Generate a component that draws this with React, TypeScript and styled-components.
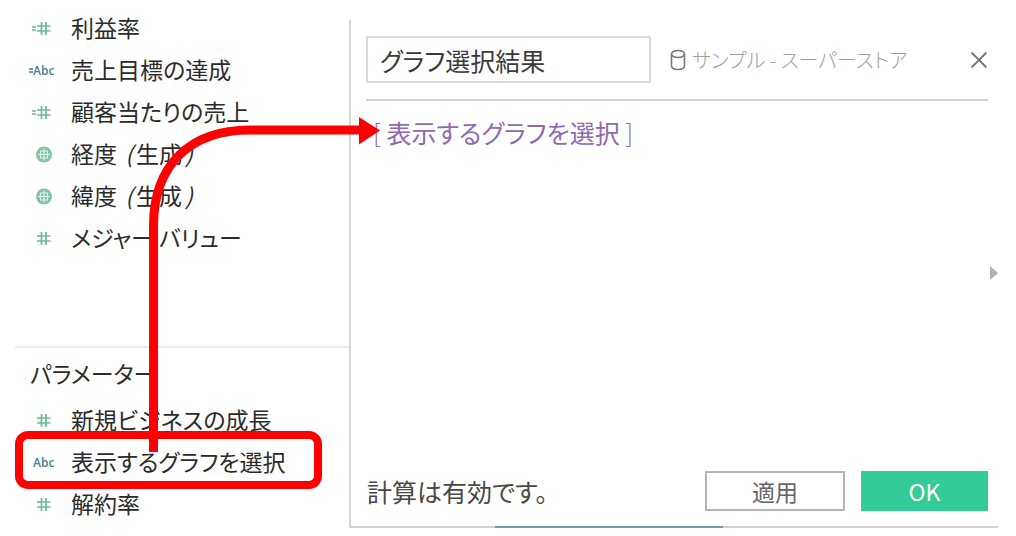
import React from "react";
import styled, { createGlobalStyle } from "styled-components";

const GlobalStyle = createGlobalStyle`
  *, *::before, *::after { box-sizing: border-box; }
  body {
    margin: 0;
    background: #fff;
    color: #2b2b2b;
    font-family: "Noto Sans CJK JP", sans-serif;
    font-size: 23px;
    font-feature-settings: "palt";
  }
  button, input { font: inherit; font-feature-settings: inherit; }
`;

const Page = styled.main`
  position: relative;
  display: grid;
  grid-template-columns: 334px minmax(0, 1fr);
  min-height: 100vh;
  padding: 20px 18px 8px 15px;
`;

const Sidebar = styled.aside`
  display: flex;
  flex-direction: column;
  padding-bottom: 2px;
`;

const Measures = styled.section`
  flex: 1;
  margin-top: -12px;
`;

const Parameters = styled.section`
  border-top: 2px solid #ececec;
`;

const Heading = styled.h2`
  margin: 0;
  padding: 0 0 2px 15px;
  font-size: 23px;
  font-weight: 400;
  line-height: 50px;
`;

const List = styled.ul`
  margin: 0;
  padding: 0;
  list-style: none;
`;

const Field = styled.li`
  position: relative;
  display: grid;
  grid-template-columns: 56px 1fr;
  align-items: center;
  height: 42px;
  white-space: nowrap;
`;

const IconCell = styled.span`
  display: flex;
  align-items: center;
  justify-content: flex-end;
  padding-right: 15px;
`;

const Label = styled.span`
  padding-bottom: 4px;
`;

const Paren = styled.i`
  margin: 0 3px;
`;

const Highlight = styled.span`
  position: absolute;
  inset: -11px 27px -5px 0;
  border: 8px solid #f00;
  border-radius: 13px;
`;

const Dialog = styled.section`
  display: flex;
  flex-direction: column;
  border-left: 2px solid #d6d6d6;
`;

const Header = styled.header`
  display: flex;
  align-items: center;
  margin: 0 10px 0 15px;
  padding: 16px 0;
  border-bottom: 2px solid #d2d2d2;
`;

const NameInput = styled.input`
  width: 285px;
  height: 47px;
  padding: 0 12px;
  border: 2px solid #d8d8d8;
  border-radius: 2px;
  background: #fff;
  color: #3a3a3a;
  font-size: 25px;
  outline: none;
`;

const Source = styled.span`
  display: flex;
  flex: 1;
  align-items: center;
  gap: 6px;
  margin-left: 19px;
  color: #a0a0a0;
  font-size: 20px;
  font-weight: 300;
  line-height: 28px;
  white-space: nowrap;
`;

const CloseButton = styled.button`
  display: flex;
  padding: 0;
  border: 0;
  background: none;
`;

const Body = styled.div`
  display: flex;
  flex: 1;
  justify-content: space-between;
`;

const Editor = styled.div`
  flex: 1;
  padding: 11px 0 0 22px;
  color: #9068b4;
  font-size: 25px;
  line-height: 40px;
  outline: none;
`;

const Bracket = styled.span`
  font-weight: 300;
`;

const ExpandButton = styled.button`
  align-self: flex-start;
  display: flex;
  margin-top: 165px;
  padding: 0;
  border: 0;
  background: none;
`;

const Footer = styled.footer`
  display: flex;
  align-items: center;
  gap: 16px;
  padding: 0 10px 15px 16px;
`;

const Status = styled.p`
  flex: 1;
  margin: 0;
  color: #484848;
  font-size: 25px;
  line-height: 40px;
`;

const ActionButton = styled.button<{ $primary?: boolean }>`
  width: ${(p) => (p.$primary ? 127 : 140)}px;
  height: 40px;
  padding: 0;
  border: 2px solid ${(p) => (p.$primary ? "#33cc99" : "#b5b5b5")};
  background: ${(p) => (p.$primary ? "#33cc99" : "#fff")};
  color: ${(p) => (p.$primary ? "#fff" : "#666")};
  line-height: 36px;
`;

const BottomEdge = styled.div`
  display: grid;
  grid-template-columns: 144px 228px 1fr;
  height: 2px;
  background: #d2d2d2;
`;

const BlueEdge = styled.span`
  grid-column: 2;
  background: #6f9fae;
`;

const Arrow = styled.svg`
  position: absolute;
  left: 0;
  top: 0;
  pointer-events: none;
`;

type Kind = "number" | "calcNumber" | "text" | "calcText" | "geo";

function FieldIcon({ kind }: { kind: Kind }) {
  const green = "#68bb95";
  const blue = "#3f8199";
  if (kind === "geo") {
    return (
      <svg width="20" height="20" viewBox="0 0 20 20" aria-hidden="true">
        <circle cx="8" cy="9.500" r="8" fill="#7fc6a6" />
        <path
          d="M2 9.500h12M8 3.500v12M4.500 6v7M11.500 6v7M4 6h8M4 13h8"
          fill="none"
          stroke="#e3f4ec"
          strokeWidth="1.100"
        />
      </svg>
    );
  }
  if (kind === "text" || kind === "calcText") {
    return (
      <svg width="30" height="20" viewBox="0 0 30 20" aria-hidden="true" overflow="visible">
        {kind === "calcText" && <path d="M3 8h4M3 11h4" stroke={blue} strokeWidth="1.600" />}
        <text x="7" y="14" fill={blue} fontFamily="Open Sans, sans-serif" fontSize="12" fontWeight="600">
          Abc
        </text>
      </svg>
    );
  }
  return (
    <svg width="26" height="20" viewBox="0 0 26 20" aria-hidden="true">
      {kind === "calcNumber" && <path d="M2 8h4M2 11h4" stroke={green} strokeWidth="1.600" />}
      <path
        d="M11.500 3v13M16 3v13M7 7h13.500M7 12h13.500"
        fill="none"
        stroke={green}
        strokeWidth="1.700"
      />
    </svg>
  );
}

const Generated = () => (
  <>
    {" "}
    <Paren>(</Paren>生成<Paren>)</Paren>
  </>
);

interface FieldData {
  kind: Kind;
  label: string;
  generated?: boolean;
  highlighted?: boolean;
}

const measures: FieldData[] = [
  { kind: "calcNumber", label: "利益率" },
  { kind: "calcText", label: "売上目標の達成" },
  { kind: "calcNumber", label: "顧客当たりの売上" },
  { kind: "geo", label: "経度", generated: true },
  { kind: "geo", label: "緯度", generated: true },
  { kind: "number", label: "メジャー バリュー" },
];

const parameters: FieldData[] = [
  { kind: "number", label: "新規ビジネスの成長" },
  { kind: "text", label: "表示するグラフを選択", highlighted: true },
  { kind: "number", label: "解約率" },
];

const FieldList = ({ fields }: { fields: FieldData[] }) => (
  <List>
    {fields.map((f) => (
      <Field key={f.label}>
        <IconCell>
          <FieldIcon kind={f.kind} />
        </IconCell>
        <Label>
          {f.label}
          {f.generated && <Generated />}
        </Label>
        {f.highlighted && <Highlight />}
      </Field>
    ))}
  </List>
);

export default function App() {
  return (
    <>
      <GlobalStyle />
      <Page>
        <Sidebar>
          <Measures>
            <FieldList fields={measures} />
          </Measures>
          <Parameters>
            <Heading>パラメーター</Heading>
            <FieldList fields={parameters} />
          </Parameters>
        </Sidebar>
        <Dialog>
          <Header>
            <NameInput aria-label="計算フィールド名" defaultValue="グラフ選択結果" />
            <Source>
              <svg width="16" height="22" viewBox="0 0 16 22" fill="none" stroke="#777" strokeWidth="1.600" aria-hidden="true">
                <ellipse cx="8" cy="5" rx="6.500" ry="3.500" />
                <path d="M1.500 5v11.500q0 4 6.500 4t6.500-4V5" />
              </svg>
              サンプル - スーパーストア
            </Source>
            <CloseButton aria-label="閉じる">
              <svg width="18" height="18" viewBox="0 0 18 18" aria-hidden="true">
                <path d="M1.500 1.500l15 15M16.500 1.500l-15 15" stroke="#757575" strokeWidth="1.800" />
              </svg>
            </CloseButton>
          </Header>
          <Body>
            <Editor role="textbox" aria-label="計算式" tabIndex={0}>
              <Bracket>[ </Bracket>
              表示するグラフを選択
              <Bracket> ]</Bracket>
            </Editor>
            <ExpandButton aria-label="関数リストを開く">
              <svg width="8" height="14" viewBox="0 0 8 14" aria-hidden="true">
                <path d="M0 0l8 7-8 7z" fill="#b0b0b0" />
              </svg>
            </ExpandButton>
          </Body>
          <Footer>
            <Status>計算は有効です。</Status>
            <ActionButton>適用</ActionButton>
            <ActionButton $primary>OK</ActionButton>
          </Footer>
          <BottomEdge>
            <BlueEdge />
          </BottomEdge>
        </Dialog>
        <Arrow width="400" height="460" viewBox="0 0 400 460" aria-hidden="true">
          <path d="M153.500 452V226C153.500 165 190 130 250 130H362" fill="none" stroke="#f00" strokeWidth="9" />
          <path d="M359 117l21 13.500-21 14z" fill="#f00" />
        </Arrow>
      </Page>
    </>
  );
}
